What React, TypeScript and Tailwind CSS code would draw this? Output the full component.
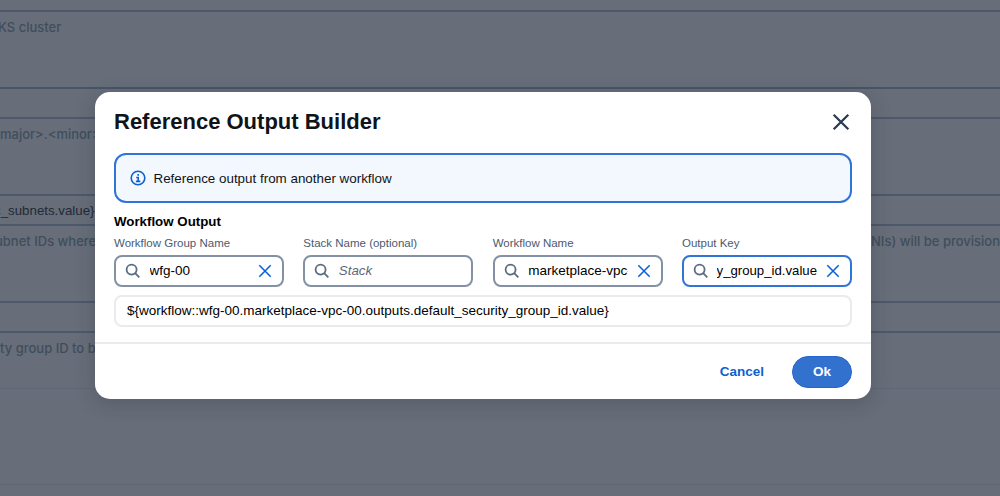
import React from "react";

const SANS = "font-['Liberation_Sans',Arial,sans-serif]";

function SearchIcon() {
  return (
    <svg className="h-4 w-4 shrink-0" viewBox="0 0 16 16" fill="none" stroke="#5a6b82" strokeWidth="1.8">
      <circle cx="6.6" cy="6.6" r="5" />
      <path d="M10.2 10.2 14.3 14.3" />
    </svg>
  );
}

function CloseIcon({ className }: { className: string }) {
  return (
    <svg className={className} viewBox="0 0 16 16" fill="none" stroke="currentColor">
      <path d="M1.5 1.5 14.5 14.5M14.5 1.5 1.5 14.5" />
    </svg>
  );
}

type FieldProps = {
  label: string;
  value?: string;
  placeholder?: string;
  active?: boolean;
};

function Field({ label, value, placeholder, active }: FieldProps) {
  return (
    <div className="min-w-0">
      <div className="h-[19px] whitespace-nowrap text-[11.5px] leading-[14px] text-[#4c5a70]">{label}</div>
      <div
        className={`flex h-8 items-center rounded-lg border-2 bg-white pl-[9px] pr-[10px] ${
          active ? "border-[#2f74d6]" : "border-[#8490a4]"
        }`}
      >
        <SearchIcon />
        <div
          className={`flex min-w-0 flex-1 overflow-hidden whitespace-nowrap leading-5 text-black ${
            active ? "ml-2 justify-end text-[13.2px]" : "ml-[8.5px] text-[13.5px]"
          }`}
        >
          {value ? <span>{value}</span> : <span className="text-[13.3px] italic text-[#5c687c]">{placeholder}</span>}
        </div>
        {value && <CloseIcon className="ml-[9px] h-[14px] w-[14px] shrink-0 stroke-[1.8] text-[#0b62d8]" />}
      </div>
    </div>
  );
}

function Backdrop() {
  const hint = "whitespace-nowrap text-[13px] font-medium leading-4 text-[#404d5b]";
  return (
    <div className="flex h-full flex-col bg-[#676e79] font-['Inter',sans-serif]">
      <div className="h-3 shrink-0 border-b-2 border-[#4d586b]" />
      <div className="h-[77px] shrink-0 border-b-2 border-[#485469] pt-[7px]">
        <p className={`-ml-[2px] ${hint}`}>KS cluster</p>
      </div>
      <div className="h-[30px] shrink-0 border-b-2 border-[#4d586b]" />
      <div className="h-[77px] shrink-0 border-b-2 border-[#4d586b] pt-[7px]">
        <p className={hint}>major&gt;.&lt;minor&gt;</p>
      </div>
      <div className="h-[30px] shrink-0 border-b-2 border-[#4d586b] pt-[7px]">
        <p className={`-ml-[6px] whitespace-nowrap text-[13.3px] leading-4 text-[#222938] ${SANS}`}>c_subnets.value&#125;</p>
      </div>
      <div className="flex h-[77px] shrink-0 justify-between overflow-hidden border-b-2 border-[#4d586b] pt-[7px]">
        <p className={`-ml-[5px] ${hint}`}>ubnet IDs where</p>
        <p className={hint}>(ENIs) will be provision</p>
      </div>
      <div className="h-[30px] shrink-0 border-b-2 border-[#4d586b]" />
      <div className="h-14 shrink-0 border-b border-[#5f6774] pt-[7px]">
        <p className={hint}>ty group ID to be</p>
      </div>
      <div className="h-[96px] shrink-0 border-b border-[#5f6672]" />
      <div className="flex-1" />
    </div>
  );
}

export default function App() {
  return (
    <div className="relative h-[496px] w-[1000px] overflow-hidden">
      <Backdrop />
      <div
        role="dialog"
        className={`absolute left-[95px] top-[91.5px] flex h-[307.5px] w-[776px] flex-col rounded-[15px] bg-white shadow-[0_4px_20px_1px_rgba(20,28,45,0.2)] ${SANS}`}
      >
        <header className="flex h-[61.5px] shrink-0 items-center justify-between pl-[19px] pr-[21px]">
          <h2 className="text-[22px] font-bold leading-7 text-[#0f141a]">Reference Output Builder</h2>
          <CloseIcon className="h-[18px] w-[18px] stroke-2 text-[#2b3a50]" />
        </header>
        <main className="flex flex-col px-[19px]">
          <div className="flex h-[50px] items-center rounded-xl border-2 border-[#2f74d6] bg-[#f2f8fd] pl-[14px]">
            <svg className="h-4 w-4" viewBox="0 0 16 16" fill="none" stroke="#0f5fd0" strokeWidth="1.6">
              <circle cx="8" cy="8" r="6.8" />
              <path d="M8.2 4v1.8M6.2 7.5h2v3.7M5.9 11.4h4.4" />
            </svg>
            <span className="ml-[7.5px] pt-px text-[13.4px] leading-5 text-[#0f141a]">Reference output from another workflow</span>
          </div>
          <h3 className="mt-[9px] h-6 text-[13.3px] font-bold leading-5 text-black">Workflow Output</h3>
          <div className="grid grid-cols-4 gap-x-[19.3px]">
            <Field label="Workflow Group Name" value="wfg-00" />
            <Field label="Stack Name (optional)" placeholder="Stack" />
            <Field label="Workflow Name" value="marketplace-vpc-00" />
            <Field label="Output Key" value="y_group_id.value" active />
          </div>
          <div className="mt-2 flex h-8 items-center rounded-lg border-2 border-[#e9ebed] pl-[11px] text-[13.5px] text-black">
            {"${workflow::wfg-00.marketplace-vpc-00.outputs.default_security_group_id.value}"}
          </div>
        </main>
        <footer className="mt-auto flex h-[57px] items-center justify-end border-t-2 border-[#e9ebed] pr-[19px] text-[13.5px] font-bold">
          <button className="pt-[2px] text-[#0f5fd0]">Cancel</button>
          <button className="ml-7 h-8 w-[60px] rounded-full border border-[#2567cd] bg-[#3371cf] pt-px text-white">Ok</button>
        </footer>
      </div>
    </div>
  );
}
